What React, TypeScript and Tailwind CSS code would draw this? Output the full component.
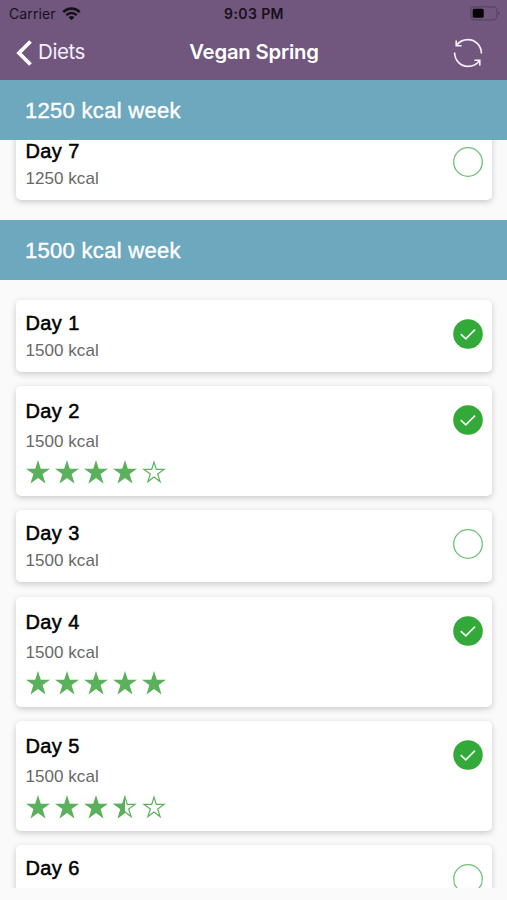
const HELV = "font-['Liberation_Sans',Arial,sans-serif]";
const STAR = 'M12 0 L14.8 8.7 H24 L16.6 14.1 L19.5 23.6 L12 17.9 L4.5 23.6 L7.4 14.1 L0 8.7 H9.2 Z';
const HOLLOW = 'M12 2.1 L14.3 9.4 H22 L15.7 13.9 L18.1 21.6 L12 17.1 L5.9 21.6 L8.3 13.9 L2 9.4 H9.7 Z';
const HALF = 'M12 0 L9.2 8.7 H0 L7.4 14.1 L4.5 23.6 L12 17.9 Z';

function Star({ fill }: { fill: number }) {
  return (
    <svg viewBox="0 0 24 24" className="h-6 w-6 text-[#5bb05b]" fill="none">
      {fill === 1 ? (
        <path d={STAR} fill="currentColor" />
      ) : (
        <>
          <path d={HOLLOW} stroke="currentColor" strokeWidth="1.2" />
          {fill > 0 && <path d={HALF} fill="currentColor" />}
        </>
      )}
    </svg>
  );
}

function Status({ done }: { done: boolean }) {
  return (
    <svg viewBox="0 0 30 30" className="h-[30px] w-[30px] shrink-0" fill="none">
      {done ? (
        <>
          <circle cx="15" cy="15" r="14.8" fill="#32a938" />
          <path d="M7.8 15.2 L12.8 19.8 L22 10.6" stroke="#f2fff2" strokeWidth="1.7" />
        </>
      ) : (
        <circle cx="15" cy="15" r="14.3" stroke="#6cc174" strokeWidth="1.3" />
      )}
    </svg>
  );
}

type DayProps = { day: number; kcal?: number; done?: boolean; rating?: number };

function DayCard({ day, kcal, done = false, rating }: DayProps) {
  const rated = rating !== undefined;
  return (
    <div
      className={`flex shrink-0 items-start justify-between rounded-[5px] bg-white pr-[9px] pl-[10px] shadow-[0_2px_6px_rgba(0,0,0,0.2)] ${rated ? 'h-[110px]' : 'h-[72px]'}`}
    >
      <div className={rated ? 'pt-[13px]' : 'pt-[11px]'}>
        <div className="text-[20px] leading-6 tracking-[0.4px] text-black [-webkit-text-stroke:0.5px_black]">Day {day}</div>
        {kcal !== undefined && (
          <div className={`text-[17px] leading-5 tracking-[0.05px] text-[#686868] ${rated ? 'mt-[9px]' : 'mt-[6px]'}`}>{kcal} kcal</div>
        )}
        {rated && (
          <div className="mt-[8px] flex gap-[5.2px]">
            {[0, 1, 2, 3, 4].map((i) => (
              <Star key={i} fill={Math.max(0, Math.min(1, rating - i))} />
            ))}
          </div>
        )}
      </div>
      <div className="pt-[19px]">
        <Status done={done} />
      </div>
    </div>
  );
}

function SectionHeader({ children }: { children: string }) {
  return (
    <div className="flex h-[60.5px] shrink-0 items-center bg-[#6ea8be] pt-px pl-[25px] text-[22px] tracking-[0.3px] text-white [-webkit-text-stroke:0.4px_white]">
      {children}
    </div>
  );
}

export default function App() {
  return (
    <div className={`flex h-[900px] w-[507px] flex-col overflow-hidden bg-[#fafafa] ${HELV}`}>
      <header className="h-[79.5px] shrink-0 bg-[#71577e] font-[Inter,sans-serif]">
        <div className="grid h-[27px] grid-cols-[1fr_auto_1fr] items-center pr-[6px] pl-[9px] text-[#17101c]">
          <div className="flex items-center gap-[6px] text-[14px]">
            <span className="tracking-[0.1px]">Carrier</span>
            <svg viewBox="0 0 20 15" className="h-[14px] w-[19px]" fill="none" stroke="currentColor" strokeWidth="2.7">
              <path d="M1.2 5.5 C6 0.5 14 0.5 18.8 5.5" />
              <path d="M4.4 8.7 C7.5 5.6 12.5 5.6 15.6 8.7" />
              <path d="M6.8 11 C8.6 9.2 11.4 9.2 13.2 11 L10 14.3 Z" fill="currentColor" stroke="none" />
            </svg>
          </div>
          <div className="mr-[2px] text-[14px] font-semibold tracking-[0.4px]">9:03 PM</div>
          <svg viewBox="0 0 31 15" className="h-[15px] w-[31px] justify-self-end" fill="none">
            <rect x="0.8" y="0.8" width="26" height="13" rx="3.5" stroke="#5a4465" strokeWidth="1.2" />
            <rect x="2.7" y="2.8" width="11" height="9" rx="1.5" fill="#050306" />
            <path d="M28.4 5 Q31 7.3 28.4 9.6 Z" fill="#4b3955" />
          </svg>
        </div>
        <div className="grid h-[51px] grid-cols-[1fr_auto_1fr] items-center pr-[24px] pl-[16px] text-white">
          <div className="flex items-center gap-[6px]">
            <svg viewBox="0 0 16 26" className="h-[26px] w-4" fill="none" stroke="currentColor" strokeWidth="3.8">
              <path d="M14.5 1.5 L3 13 L14.5 24.5" />
            </svg>
            <span className="text-[20.5px] tracking-[-0.4px] text-[#f8eefc]">Diets</span>
          </div>
          <h1 className="pl-[9px] text-[20.3px] font-semibold tracking-[-0.2px]">Vegan Spring</h1>
          <svg viewBox="0 0 30 30" className="h-[30px] w-[30px] justify-self-end" fill="none" stroke="#f8eefc" strokeWidth="1.6">
            <path d="M28.4 15.5 C28.4 7.8 22.5 1.6 15 1.6 C10.2 1.6 5.8 4 3.4 7.6" />
            <path d="M3.2 2.6 V7.8 H8.6" />
            <path d="M1.6 14.5 C1.6 22.2 7.5 28.4 15 28.4 C19.8 28.4 24.2 26 26.6 22.4" />
            <path d="M26.8 27.4 V22.2 H21.4" />
          </svg>
        </div>
      </header>
      <SectionHeader>1250 kcal week</SectionHeader>
      <div className="flex h-[747.5px] shrink-0 flex-col overflow-hidden">
        <div className="-mt-[12.5px] mb-[20px] px-[15.5px]">
          <DayCard day={7} kcal={1250} />
        </div>
        <SectionHeader>1500 kcal week</SectionHeader>
        <div className="flex flex-col gap-[14.3px] px-[15.5px] pt-[19.8px]">
          <DayCard day={1} kcal={1500} done />
          <DayCard day={2} kcal={1500} done rating={4} />
          <DayCard day={3} kcal={1500} />
          <DayCard day={4} kcal={1500} done rating={5} />
          <DayCard day={5} kcal={1500} done rating={3.5} />
          <DayCard day={6} />
        </div>
      </div>
    </div>
  );
}
